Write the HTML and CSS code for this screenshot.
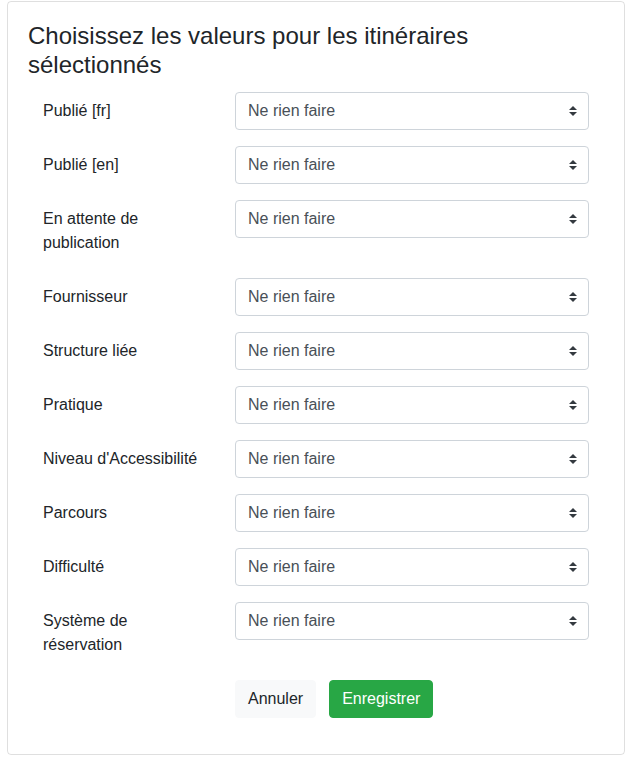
FILE: index.html
```html
<!DOCTYPE html>
<html lang="fr">
<head>
    <meta charset="UTF-8">
    <meta name="viewport" content="width=device-width, initial-scale=1.0">
    <title>Modification groupée</title>
    <link rel="stylesheet" href="styles.css">
</head>
<body>

    <div class="card">
        <h4 class="card-title">Choisissez les valeurs pour les itinéraires sélectionnés</h4>

        <form class="bulk-form">
            <div class="form-group">
                <label class="col-label">Publié [fr]</label>
                <div class="col-field">
                    <div class="select-wrap">
                        <select class="custom-select"><option>Ne rien faire</option></select>
                        <svg class="caret" viewBox="0 0 4 5" width="8" height="10"><path fill="#343a40" d="M2 0L0 2h4zm0 5L0 3h4z"/></svg>
                    </div>
                </div>
            </div>
            <div class="form-group">
                <label class="col-label">Publié [en]</label>
                <div class="col-field">
                    <div class="select-wrap">
                        <select class="custom-select"><option>Ne rien faire</option></select>
                        <svg class="caret" viewBox="0 0 4 5" width="8" height="10"><path fill="#343a40" d="M2 0L0 2h4zm0 5L0 3h4z"/></svg>
                    </div>
                </div>
            </div>
            <div class="form-group">
                <label class="col-label">En attente de publication</label>
                <div class="col-field">
                    <div class="select-wrap">
                        <select class="custom-select"><option>Ne rien faire</option></select>
                        <svg class="caret" viewBox="0 0 4 5" width="8" height="10"><path fill="#343a40" d="M2 0L0 2h4zm0 5L0 3h4z"/></svg>
                    </div>
                </div>
            </div>
            <div class="form-group">
                <label class="col-label">Fournisseur</label>
                <div class="col-field">
                    <div class="select-wrap">
                        <select class="custom-select"><option>Ne rien faire</option></select>
                        <svg class="caret" viewBox="0 0 4 5" width="8" height="10"><path fill="#343a40" d="M2 0L0 2h4zm0 5L0 3h4z"/></svg>
                    </div>
                </div>
            </div>
            <div class="form-group">
                <label class="col-label">Structure liée</label>
                <div class="col-field">
                    <div class="select-wrap">
                        <select class="custom-select"><option>Ne rien faire</option></select>
                        <svg class="caret" viewBox="0 0 4 5" width="8" height="10"><path fill="#343a40" d="M2 0L0 2h4zm0 5L0 3h4z"/></svg>
                    </div>
                </div>
            </div>
            <div class="form-group">
                <label class="col-label">Pratique</label>
                <div class="col-field">
                    <div class="select-wrap">
                        <select class="custom-select"><option>Ne rien faire</option></select>
                        <svg class="caret" viewBox="0 0 4 5" width="8" height="10"><path fill="#343a40" d="M2 0L0 2h4zm0 5L0 3h4z"/></svg>
                    </div>
                </div>
            </div>
            <div class="form-group">
                <label class="col-label">Niveau d'Accessibilité</label>
                <div class="col-field">
                    <div class="select-wrap">
                        <select class="custom-select"><option>Ne rien faire</option></select>
                        <svg class="caret" viewBox="0 0 4 5" width="8" height="10"><path fill="#343a40" d="M2 0L0 2h4zm0 5L0 3h4z"/></svg>
                    </div>
                </div>
            </div>
            <div class="form-group">
                <label class="col-label">Parcours</label>
                <div class="col-field">
                    <div class="select-wrap">
                        <select class="custom-select"><option>Ne rien faire</option></select>
                        <svg class="caret" viewBox="0 0 4 5" width="8" height="10"><path fill="#343a40" d="M2 0L0 2h4zm0 5L0 3h4z"/></svg>
                    </div>
                </div>
            </div>
            <div class="form-group">
                <label class="col-label">Difficulté</label>
                <div class="col-field">
                    <div class="select-wrap">
                        <select class="custom-select"><option>Ne rien faire</option></select>
                        <svg class="caret" viewBox="0 0 4 5" width="8" height="10"><path fill="#343a40" d="M2 0L0 2h4zm0 5L0 3h4z"/></svg>
                    </div>
                </div>
            </div>
            <div class="form-group">
                <label class="col-label">Système de réservation</label>
                <div class="col-field">
                    <div class="select-wrap">
                        <select class="custom-select"><option>Ne rien faire</option></select>
                        <svg class="caret" viewBox="0 0 4 5" width="8" height="10"><path fill="#343a40" d="M2 0L0 2h4zm0 5L0 3h4z"/></svg>
                    </div>
                </div>
            </div>

            <div class="form-group">
                <div class="col-label"></div>
                <div class="col-field actions">
                    <button type="button" class="btn btn-light">Annuler</button>
                    <button type="submit" class="btn btn-success">Enregistrer</button>
                </div>
            </div>
        </form>
    </div>

</body>
</html>
```

FILE: styles.css
```css
* {
    box-sizing: border-box;
}
body {
    font-family: "Liberation Sans", Arial, sans-serif;
    font-size: 16px;
    line-height: 1.5;
    color: #212529;
    background: #fff;
    margin: 0;
    padding: 1px 0 0 7px;
}
.card {
    width: 618px;
    border: 1px solid rgba(0, 0, 0, .125);
    border-radius: 4px;
    padding: 20px;
}
.card-title {
    font-size: 24px;
    font-weight: 500;
    line-height: 1.2;
    margin: 0 0 12px;
}
.bulk-form {
    margin: 0;
}
.form-group {
    display: flex;
    margin-bottom: 16px;
}
.col-label {
    flex: 0 0 33.3333%;
    max-width: 33.3333%;
    padding: 7px 15px;
    line-height: 1.5;
}
.col-field {
    flex: 0 0 66.6667%;
    max-width: 66.6667%;
    padding: 0 15px;
}
.select-wrap {
    position: relative;
}
.custom-select {
    display: block;
    width: 100%;
    height: 38px;
    padding: 6px 28px 6px 12px;
    font-family: inherit;
    font-size: 16px;
    line-height: 1.5;
    color: #495057;
    background: #fff;
    border: 1px solid #ced4da;
    border-radius: 4px;
    appearance: none;
    -webkit-appearance: none;
}
.caret {
    position: absolute;
    right: 12px;
    top: 14px;
    pointer-events: none;
}
.actions {
    display: flex;
    gap: 13px;
}
.btn {
    font-family: inherit;
    font-size: 16px;
    line-height: 1.5;
    padding: 6px 12px;
    border: 1px solid transparent;
    border-radius: 4px;
    cursor: pointer;
}
.btn-light {
    background: #f8f9fa;
    border-color: #f8f9fa;
    color: #212529;
}
.btn-success {
    background: #28a745;
    border-color: #28a745;
    color: #fff;
}
```
